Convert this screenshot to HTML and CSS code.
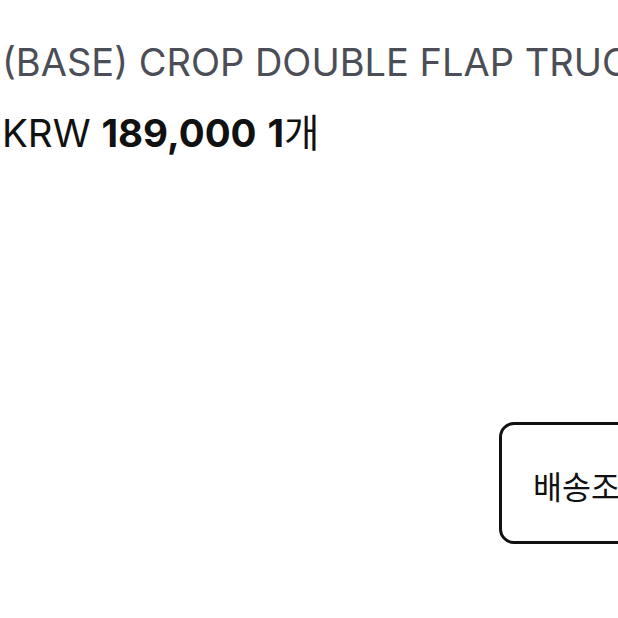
FILE: index.html
```html
<!DOCTYPE html>
<html lang="ko">
<head>
<meta charset="utf-8">
<link rel="stylesheet" href="styles.css">
</head>
<body>
<div class="page">
  <h1 class="title">(BASE) CROP DOUBLE FLAP TRUCKER JACKET</h1>
  <p class="price"><span class="cur">KRW</span> <b>189,000</b> <b>1</b><span class="qty">개</span></p>
  <div class="actions">
    <button class="btn">배송조회</button>
  </div>
</div>
</body>
</html>
```
FILE: styles.css
```css
html, body {
  margin: 0;
  padding: 0;
  background: #fff;
  overflow: hidden;
}
.page {
  width: 618px;
  height: 618px;
  overflow: hidden;
  font-family: Inter, "Noto Sans CJK KR", sans-serif;
  padding-top: 37px;
  box-sizing: border-box;
}
.title {
  margin: 0 0 0 2px;
  font-size: 38px;
  font-weight: 400;
  color: #4b4e57;
  white-space: nowrap;
  line-height: 50px;
}
.price {
  margin: 20px 0 0 2px;
  font-size: 38.5px;
  color: #111;
  white-space: nowrap;
  line-height: 46px;
}
.price b {
  font-weight: 700;
}
.qty {
  font-family: "Noto Sans CJK KR", sans-serif;
  font-weight: 400;
}
.actions {
  display: flex;
  margin-top: 266px;
  padding-left: 499px;
}
.btn {
  flex: 0 0 auto;
  width: 260px;
  height: 122px;
  border: 3px solid #111;
  border-radius: 15px;
  background: #fff;
  font-family: "Noto Sans CJK KR", sans-serif;
  font-size: 31.5px;
  color: #111;
  text-align: left;
  padding: 4px 0 0 31px;
}
```
